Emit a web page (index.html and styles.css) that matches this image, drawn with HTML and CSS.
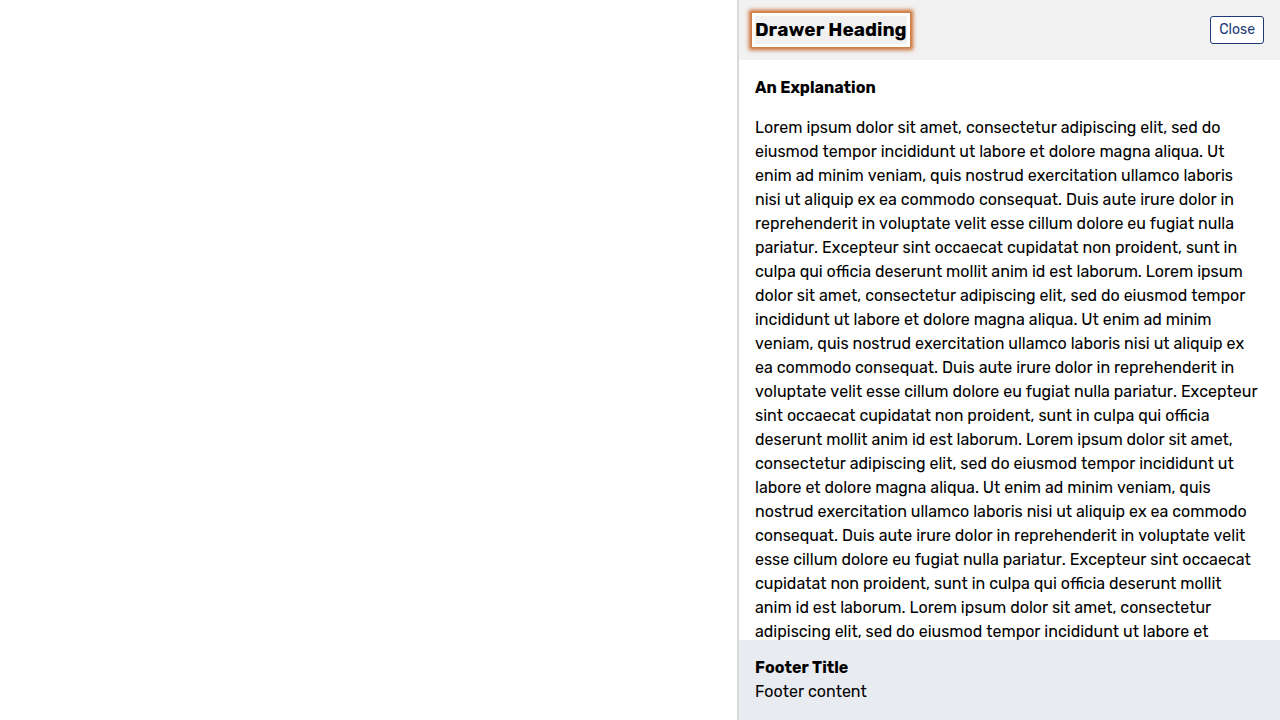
FILE: index.html
```html
<!DOCTYPE html>
<html lang="en">
<head>
<meta charset="utf-8">
<meta name="viewport" content="width=device-width, initial-scale=1">
<title>Drawer</title>
<link rel="stylesheet" href="styles.css">
</head>
<body>
<div class="page">
<aside class="drawer" aria-labelledby="drawer-heading">
<header class="drawer-header">
<h2 class="drawer-heading" id="drawer-heading" tabindex="-1">Drawer Heading</h2>
<button class="close-button" type="button">Close</button>
</header>
<div class="drawer-body">
<h3 class="body-title">An Explanation</h3>
<p class="body-text">Lorem ipsum dolor sit amet, consectetur adipiscing elit, sed do<br>
eiusmod tempor incididunt ut labore et dolore magna aliqua. Ut<br>
enim ad minim veniam, quis nostrud exercitation ullamco laboris<br>
nisi ut aliquip ex ea commodo consequat. Duis aute irure dolor in<br>
reprehenderit in voluptate velit esse cillum dolore eu fugiat nulla<br>
pariatur. Excepteur sint occaecat cupidatat non proident, sunt in<br>
culpa qui officia deserunt mollit anim id est laborum. Lorem ipsum<br>
dolor sit amet, consectetur adipiscing elit, sed do eiusmod tempor<br>
incididunt ut labore et dolore magna aliqua. Ut enim ad minim<br>
veniam, quis nostrud exercitation ullamco laboris nisi ut aliquip ex<br>
ea commodo consequat. Duis aute irure dolor in reprehenderit in<br>
voluptate velit esse cillum dolore eu fugiat nulla pariatur. Excepteur<br>
sint occaecat cupidatat non proident, sunt in culpa qui officia<br>
deserunt mollit anim id est laborum. Lorem ipsum dolor sit amet,<br>
consectetur adipiscing elit, sed do eiusmod tempor incididunt ut<br>
labore et dolore magna aliqua. Ut enim ad minim veniam, quis<br>
nostrud exercitation ullamco laboris nisi ut aliquip ex ea commodo<br>
consequat. Duis aute irure dolor in reprehenderit in voluptate velit<br>
esse cillum dolore eu fugiat nulla pariatur. Excepteur sint occaecat<br>
cupidatat non proident, sunt in culpa qui officia deserunt mollit<br>
anim id est laborum. Lorem ipsum dolor sit amet, consectetur<br>
adipiscing elit, sed do eiusmod tempor incididunt ut labore et</p>
</div>
<footer class="drawer-footer">
<h3 class="footer-title">Footer Title</h3>
<p class="footer-text">Footer content</p>
</footer>
</aside>
</div>
</body>
</html>
```
FILE: styles.css
```css
* {
  box-sizing: border-box;
}

body {
  margin: 0;
  background: #fff;
  color: #000;
  font-family: Rubik, Roboto, sans-serif;
  font-size: 16px;
  font-kerning: none;
  line-height: 24px;
}

h2, h3, p {
  margin: 0;
}

.page {
  display: flex;
  justify-content: flex-end;
  height: 100vh;
}

.drawer {
  display: flex;
  flex-direction: column;
  width: 543px;
  max-width: 100%;
  border-left: 2px solid #d9d9d9;
  background: #fff;
}

.drawer-header {
  display: flex;
  align-items: flex-start;
  justify-content: space-between;
  padding: 16px;
  background: #f1f1f1;
}

.drawer-heading {
  font-size: 19px;
  font-weight: 700;
  line-height: 28px;
  outline: none;
  box-shadow: 0 0 0 3px #fff, 0 0 0 4px #cf8045, 0 0 4px 6px #c8682a;
}

.close-button {
  padding: 4px 8px;
  border: 1px solid #1c3b78;
  border-radius: 3px;
  background: #fff;
  color: #1c3b78;
  font-family: inherit;
  font-size: 14px;
  line-height: 18px;
}

.drawer-body {
  flex: 1;
  min-height: 0;
  padding: 16px 16px 0;
  overflow: hidden;
}

.body-title {
  margin-bottom: 16px;
  font-size: 16px;
  font-weight: 700;
}

.body-text {
  white-space: nowrap;
}

.drawer-footer {
  padding: 16px;
  background: #e8ebf0;
}

.footer-title {
  font-size: 16px;
  font-weight: 700;
}
```
